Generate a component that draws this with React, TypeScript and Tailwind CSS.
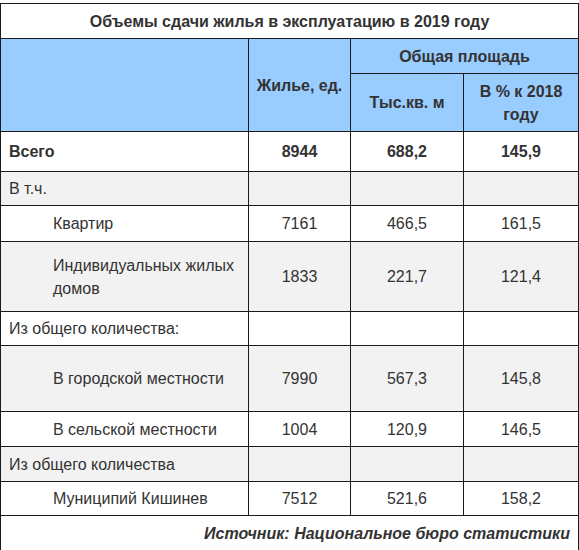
import React from "react";

type Row = { label: string; a?: string; b?: string; c?: string; bold?: boolean; indent?: boolean; gray?: boolean; h: string };

const rows: Row[] = [
  { label: "Всего", a: "8944", b: "688,2", c: "145,9", bold: true, h: "h-[40px]" },
  { label: "В т.ч.", gray: true, h: "h-[34px]" },
  { label: "Квартир", a: "7161", b: "466,5", c: "161,5", indent: true, h: "h-[36px]" },
  { label: "Индивидуальных жилых домов", a: "1833", b: "221,7", c: "121,4", indent: true, gray: true, h: "h-[70px]" },
  { label: "Из общего количества:", h: "h-[34px]" },
  { label: "В городской местности", a: "7990", b: "567,3", c: "145,8", indent: true, gray: true, h: "h-[66px]" },
  { label: "В сельской местности", a: "1004", b: "120,9", c: "146,5", indent: true, h: "h-[35px]" },
  { label: "Из общего количества", gray: true, h: "h-[35px]" },
  { label: "Муниципий Кишинев", a: "7512", b: "521,6", c: "158,2", indent: true, h: "h-[34px]" },
];

const cell = "border border-[#1a1a1a] px-2";

export default function App() {
  return (
    <div className="bg-white pt-[3px] text-[16px] leading-[23px] text-[#333]" style={{ fontFamily: '"Liberation Sans", Arial, sans-serif' }}>
      <table className="w-[578px] table-fixed border-collapse">
        <colgroup>
          <col className="w-[248px]" />
          <col className="w-[102px]" />
          <col className="w-[113px]" />
          <col className="w-[115px]" />
        </colgroup>
        <tbody>
          <tr className="h-[35px]">
            <td colSpan={4} className={`${cell} text-center font-bold`}>Объемы сдачи жилья в эксплуатацию в 2019 году</td>
          </tr>
          <tr className="h-[35px] bg-[#99ccff] font-bold">
            <td rowSpan={2} className={cell}></td>
            <td rowSpan={2} className="border border-[#1a1a1a] px-0 text-center whitespace-nowrap">Жилье, ед.</td>
            <td colSpan={2} className={`${cell} text-center`}>Общая площадь</td>
          </tr>
          <tr className="h-[58px] bg-[#99ccff] font-bold">
            <td className={`${cell} text-center`}>Тыс.кв. м</td>
            <td className={`${cell} text-center`}>В % к 2018 году</td>
          </tr>
          {rows.map((r) => (
            <tr key={r.label + r.h} className={`${r.h} ${r.gray ? "bg-[#f2f2f2]" : "bg-white"} ${r.bold ? "font-bold" : ""}`}>
              <td className={`${cell} ${r.indent ? "pl-[52px]" : ""}`}>{r.label}</td>
              <td className={`${cell} text-center`}>{r.a}</td>
              <td className={`${cell} text-center`}>{r.b}</td>
              <td className={`${cell} text-center`}>{r.c}</td>
            </tr>
          ))}
          <tr className="h-[36px]">
            <td colSpan={4} className={`${cell} text-right font-bold italic`}>Источник: Национальное бюро статистики</td>
          </tr>
        </tbody>
      </table>
    </div>
  );
}
